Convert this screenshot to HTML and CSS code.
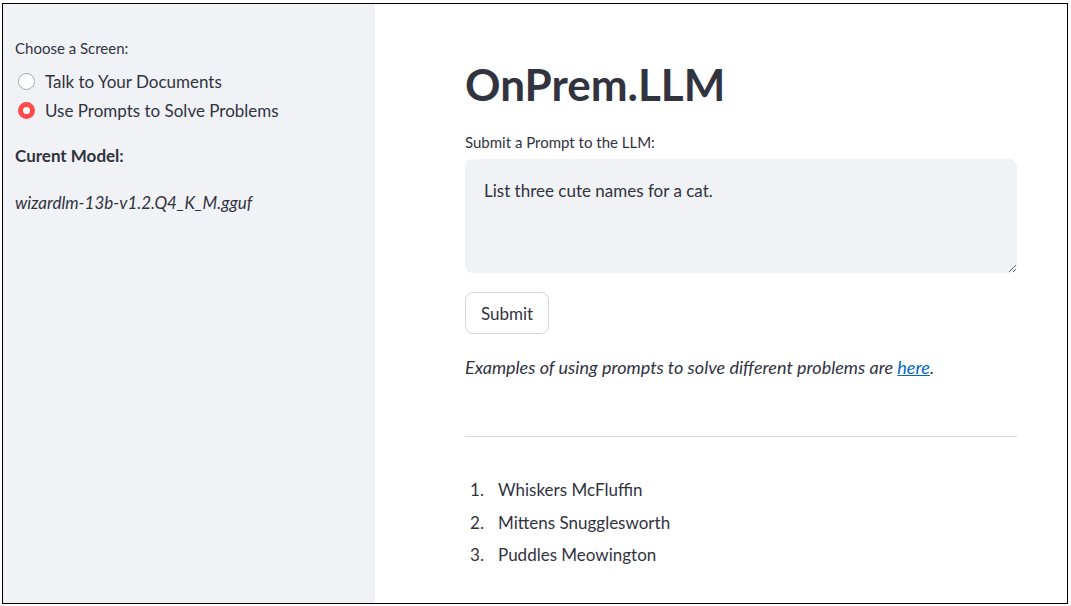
FILE: index.html
```html
<!DOCTYPE html>
<html lang="en">
<head>
<meta charset="utf-8">
<title>OnPrem.LLM</title>
<link rel="stylesheet" href="styles.css">
</head>
<body>
<div class="frame">
  <aside class="sidebar">
    <div class="widget-label">Choose a Screen:</div>
    <div class="radio-group">
      <label class="radio-row"><span class="radio"></span><span>Talk to Your Documents</span></label>
      <label class="radio-row"><span class="radio checked"></span><span>Use Prompts to Solve Problems</span></label>
    </div>
    <p class="model-title">Curent Model:</p>
    <p class="model-name">wizardlm-13b-v1.2.Q4_K_M.gguf</p>
  </aside>
  <main class="main">
    <div class="content">
      <h1 class="title">OnPrem.LLM</h1>
      <div class="widget-label main-label">Submit a Prompt to the LLM:</div>
      <textarea class="prompt">List three cute names for a cat.</textarea>
      <button class="btn">Submit</button>
      <p class="examples">Examples of using prompts to solve different problems are <a href="#">here</a>.</p>
      <hr class="divider">
      <ol class="answers">
        <li>Whiskers McFluffin</li>
        <li>Mittens Snugglesworth</li>
        <li>Puddles Meowington</li>
      </ol>
    </div>
  </main>
</div>
</body>
</html>
```
FILE: styles.css
```css
* { box-sizing: border-box; }
html, body { margin: 0; padding: 0; background: #fff; }
body {
  font-family: Lato, "Liberation Sans", sans-serif;
  color: #31333f;
  width: 1071px;
  height: 606px;
  overflow: hidden;
}
.frame {
  margin: 3px 0 0 2px;
  width: 1066px;
  height: 601px;
  border: 1px solid #000;
  display: flex;
}
.sidebar {
  width: 372px;
  flex: none;
  background: #f0f2f6;
  padding: 34px 12px 0 12px;
}
.widget-label {
  font-size: 15px;
  line-height: 20px;
  height: 20px;
}
.radio-group {
  margin-top: 9px;
  display: flex;
  flex-direction: column;
}
.radio-row {
  display: flex;
  align-items: center;
  height: 29px;
  font-size: 17px;
  gap: 10px;
}
.radio {
  width: 17px;
  height: 17px;
  border-radius: 50%;
  border: 1px solid #a3a8b4;
  background: #fff;
  flex: none;
  margin-left: 3px;
}
.radio.checked {
  border: 5px solid #ff4b4b;
  background: #fff;
}
.model-title {
  margin: 19px 0 0;
  font-weight: 700;
  font-size: 17px;
  line-height: 24px;
}
.model-name {
  margin: 23px 0 0;
  font-style: italic;
  font-size: 17px;
  line-height: 24px;
}
.main {
  flex: 1;
  background: #fff;
  padding-left: 90px;
}
.content {
  width: 552px;
}
.title {
  margin: 50px 0 0;
  font-size: 44px;
  line-height: 60px;
  font-weight: 700;
}
.main-label {
  margin-top: 18px;
}
.prompt {
  display: block;
  margin-top: 7px;
  width: 552px;
  height: 114px;
  border: none;
  border-radius: 8px;
  background: #f0f2f6;
  padding: 20px 19px;
  font: inherit;
  font-size: 17px;
  line-height: 24px;
  color: #31333f;
  resize: vertical;
  outline: none;
}
.btn {
  display: block;
  margin-top: 19px;
  width: 84px;
  height: 42px;
  background: #fff;
  border: 1px solid #d5d6da;
  border-radius: 8px;
  font: inherit;
  font-size: 17px;
  color: #31333f;
  padding: 0;
}
.examples {
  margin: 21px 0 0;
  font-style: italic;
  font-size: 18px;
  line-height: 24px;
}
.examples a {
  color: #0068c9;
  text-decoration: underline;
}
.divider {
  margin: 57px 0 0;
  border: none;
  border-top: 1px solid #d6d6d9;
  height: 0;
}
.answers {
  margin: 41px 0 0;
  padding: 0;
  list-style: none;
  counter-reset: item;
  font-size: 17px;
  line-height: 24px;
}
.answers li {
  counter-increment: item;
  display: flex;
  margin-bottom: 8.5px;
}
.answers li::before {
  content: counter(item) ".";
  box-sizing: border-box;
  width: 33px;
  padding-left: 5px;
  flex: none;
}
```
